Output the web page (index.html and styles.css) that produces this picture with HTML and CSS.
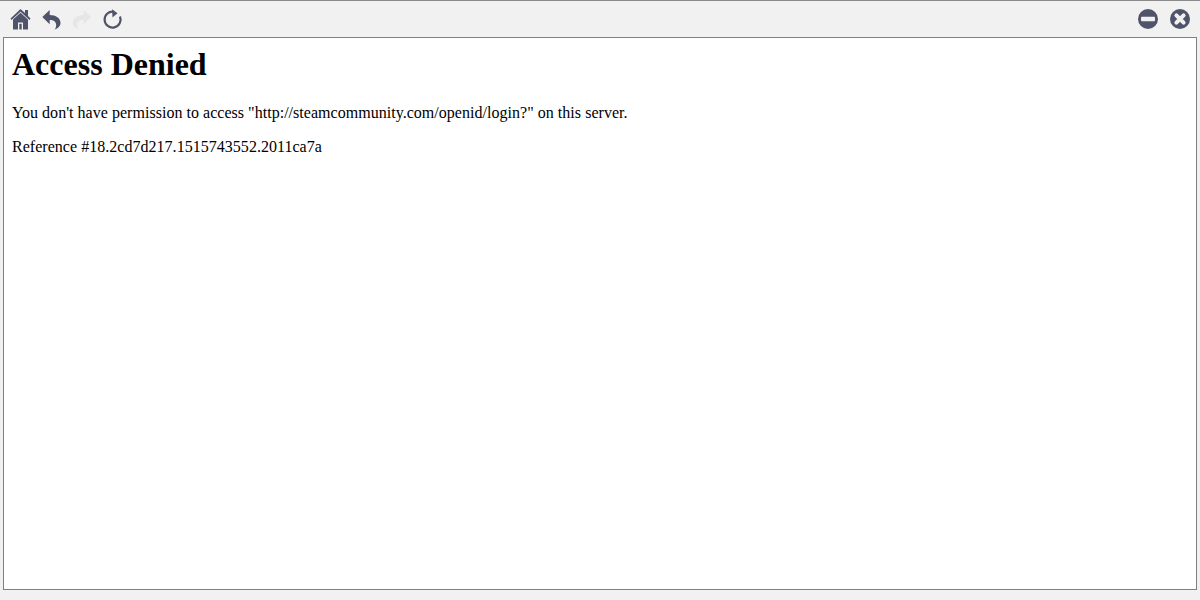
FILE: index.html
```html
<!DOCTYPE html>
<html lang="en">
<head>
<meta charset="utf-8">
<title>Access Denied</title>
<link rel="stylesheet" href="styles.css">
</head>
<body>
<div class="window">
  <div class="toolbar">
    <div class="nav">
      <svg class="icon" viewBox="0 0 22 22"><path fill="#50546a" d="M10.500 1 15 5V2h3v6l2.500 2.500-1 1.500-9-8.200-9 8.200-1-1.500z"/><path fill="#50546a" d="M10.500 4.700 18 11.500V21.500h-5v-7H8v7H3V11.500z"/><rect x="9.300" y="15.800" width="2.400" height="5.700" fill="#50546a"/></svg>
      <svg class="icon" viewBox="0 0 22 22"><path fill="#50546a" d="M1.300 9 8.700 2v5c6.300 0 10.800 3 10.800 8 0 3-2.500 5.500-5.800 6.500 1.800-2.500 1.800-5 .8-7-1-2-3.500-2.500-5.800-2.500v4.300z"/></svg>
      <svg class="icon" viewBox="0 0 22 22"><path fill="#e6e6e6" d="M19 9 11.600 2v5C5.300 7 .8 10 .8 15c0 3 2.500 5.500 5.800 6.500-1.800-2.500-1.800-5-.8-7 1-2 3.500-2.500 5.800-2.500v4.300z"/></svg>
      <svg class="icon" viewBox="0 0 22 22"><path fill="none" stroke="#50546a" stroke-width="2.200" d="M10.500 3.600A8 8 0 1 0 17 8.500"/><path fill="#50546a" d="M9 1.200l5.500 4-5 4.300z"/></svg>
    </div>
    <div class="actions">
      <svg class="icon" viewBox="0 0 22 22"><circle cx="11" cy="11" r="10" fill="#50546a"/><rect x="4" y="8.800" width="14" height="4.400" rx="1" fill="#f1f1f1"/></svg>
      <svg class="icon" viewBox="0 0 22 22"><circle cx="11" cy="11" r="10" fill="#50546a"/><path stroke="#f1f1f1" stroke-width="4" stroke-linecap="round" d="M7.400 7.400l7.200 7.200M14.600 7.400l-7.200 7.200"/></svg>
    </div>
  </div>
  <div class="frame">
    <h1>Access Denied</h1>
    <p>You don't have permission to access "http://steamcommunity.com/openid/login?" on this server.</p>
    <p>Reference #18.2cd7d217.1515743552.2011ca7a</p>
  </div>
</div>
</body>
</html>
```

FILE: styles.css
```css
html, body {
  margin: 0;
  height: 100%;
}
body {
  background: #f1f1f1;
  font-family: "Liberation Serif", "Times New Roman", serif;
  color: #000;
}
.window {
  box-sizing: border-box;
  height: 600px;
  display: flex;
  flex-direction: column;
  border-top: 1px solid #8a8a8a;
  padding: 0 3px 10px;
}
.toolbar {
  height: 36px;
  display: flex;
  align-items: center;
  justify-content: space-between;
  padding: 0 6.5px 0 7px;
}
.nav, .actions {
  display: flex;
  align-items: center;
}
.nav { gap: 9px; }
.actions { gap: 9.500px; }
.icon {
  width: 22px;
  height: 22px;
  display: block;
}
.frame {
  flex: 1;
  background: #fff;
  border: 1px solid #808080;
  padding: 8px;
}
h1 {
  font-size: 32px;
  font-weight: bold;
  margin: 0 0 21px;
}
p {
  font-size: 16px;
  letter-spacing: 0.03px;
  margin: 0 0 16px;
}
```
